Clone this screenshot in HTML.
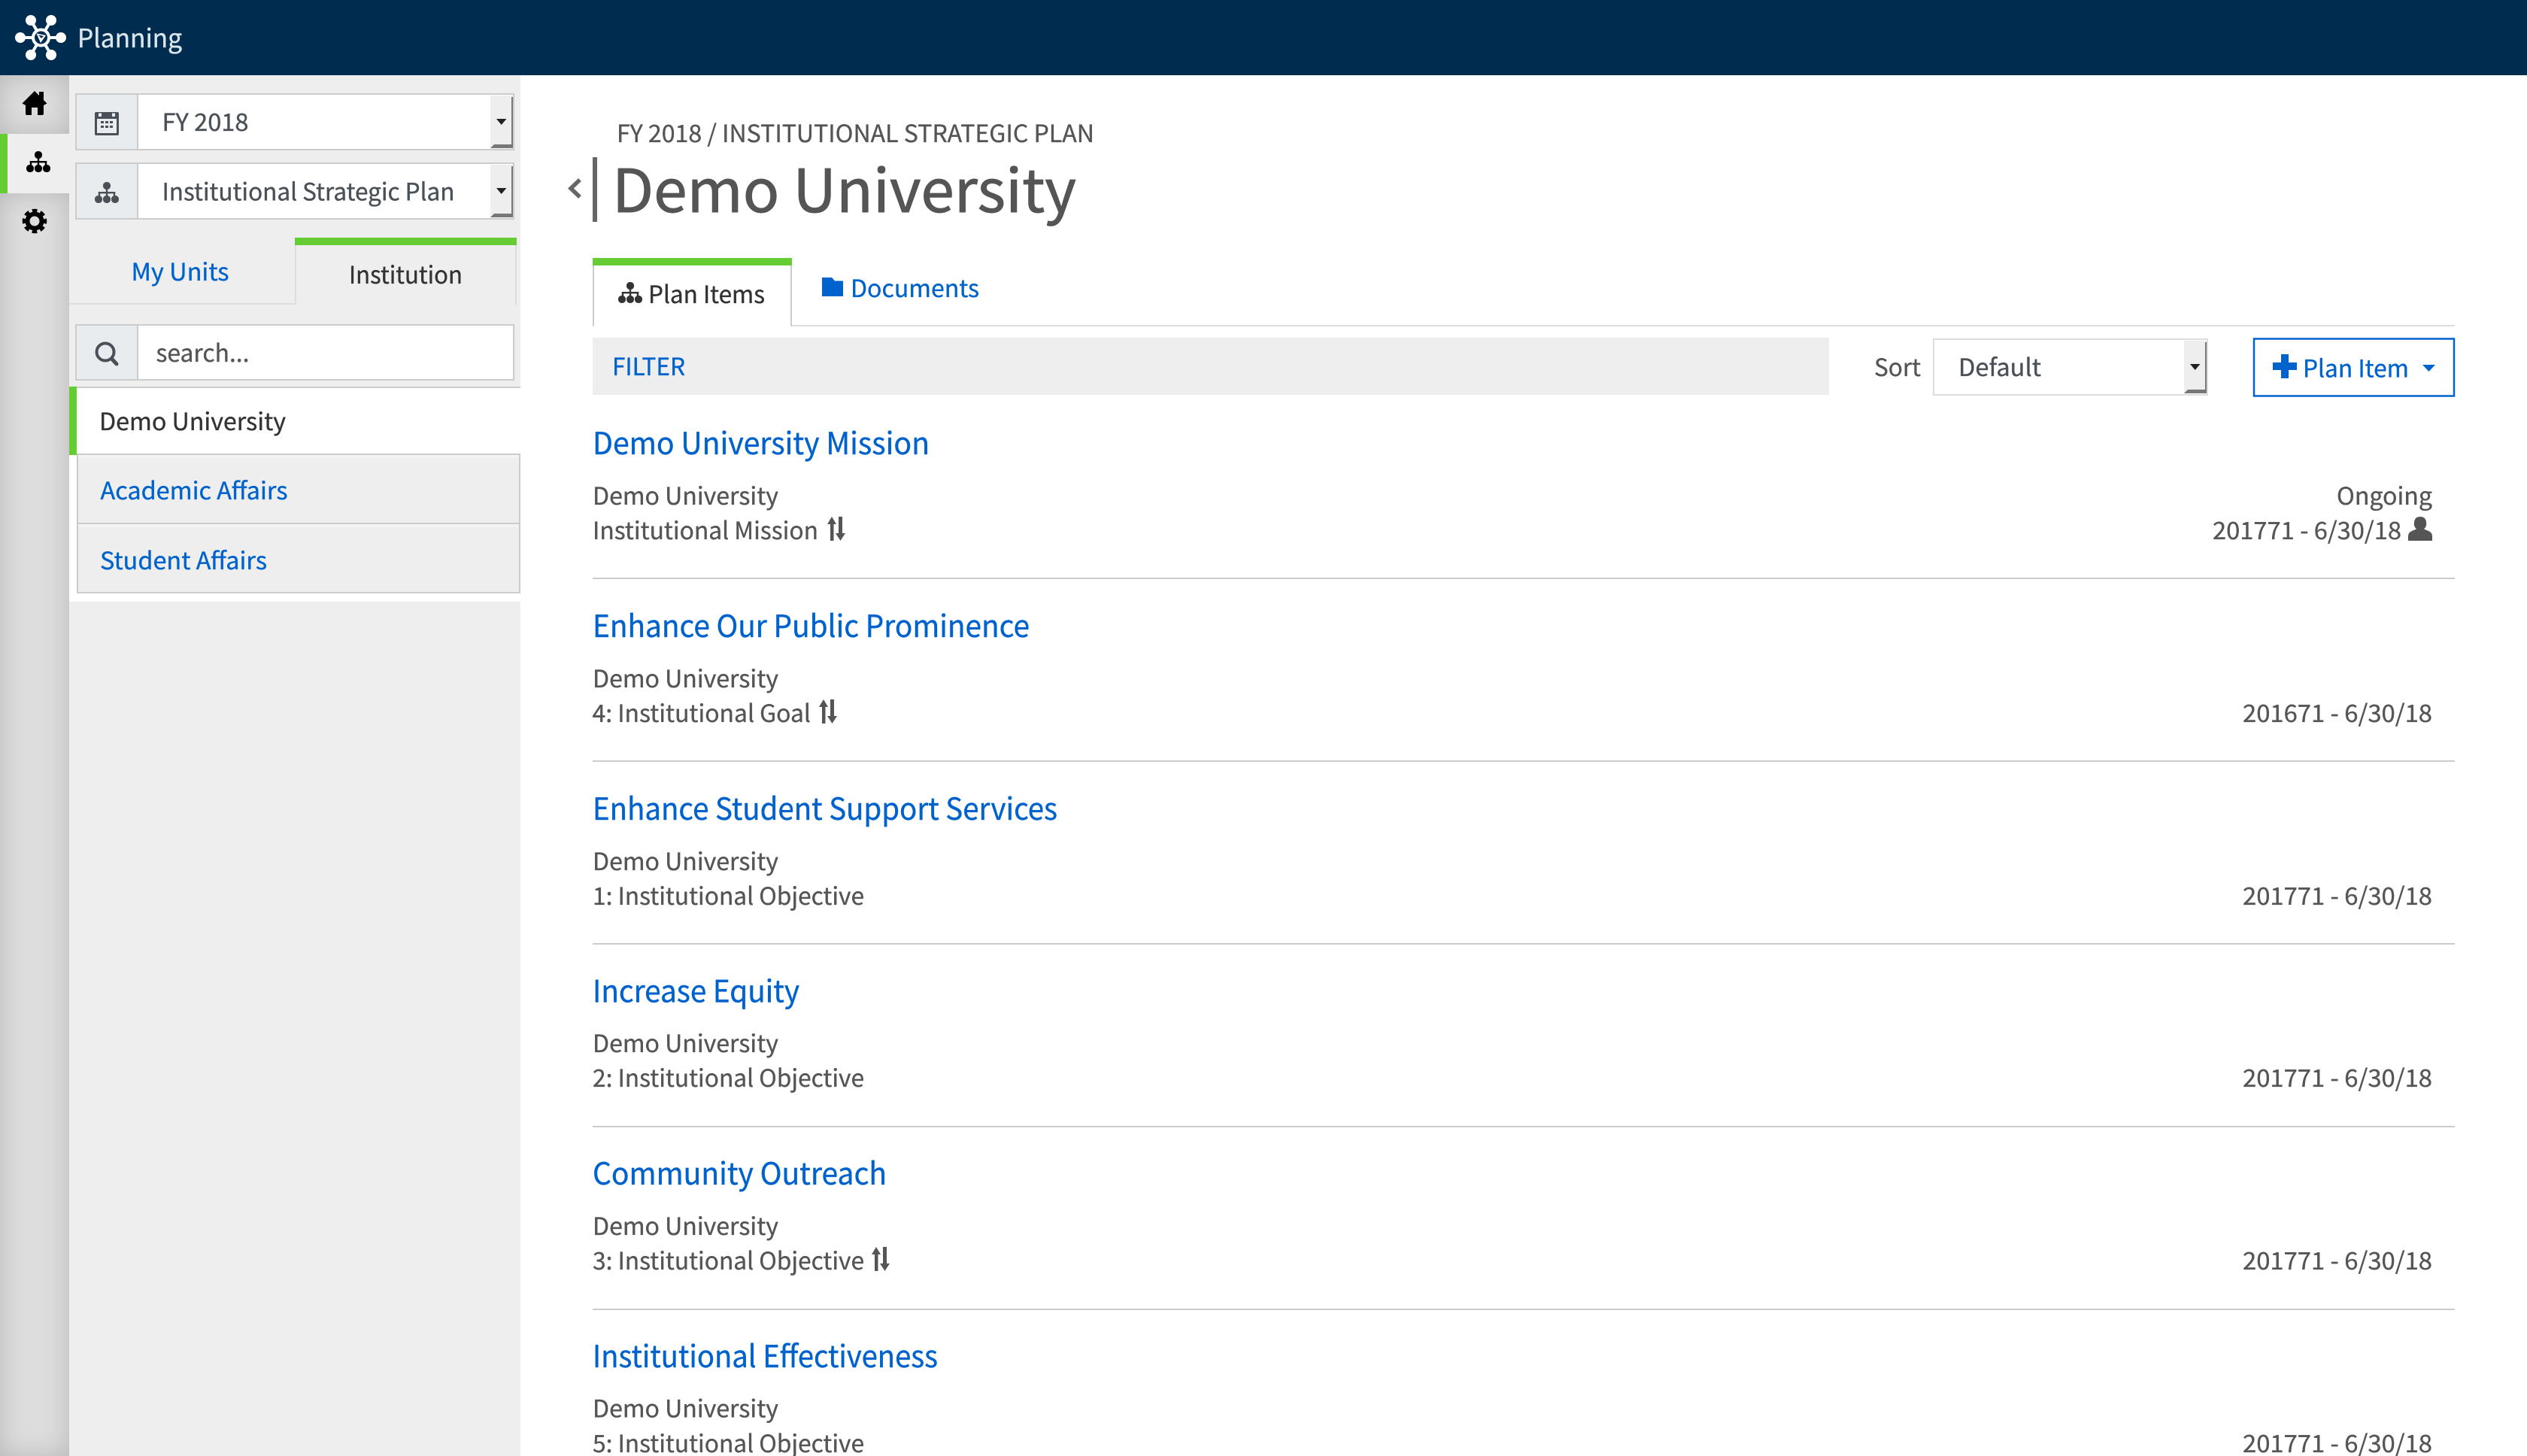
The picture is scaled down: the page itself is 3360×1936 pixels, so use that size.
<!DOCTYPE html>
<html><head><meta charset="utf-8"><title>Planning</title>
<style>
html,body{margin:0;padding:0;background:#fff}
body{width:3360px;height:1936px;overflow:hidden;position:relative}
.r{position:absolute;left:0;width:92px;background:#ddd;box-shadow:inset 0 0 34px rgba(0,0,0,.17)}
svg{position:absolute;left:0;top:0}
text{font-family:"Noto Sans CJK JP","Liberation Sans",sans-serif;font-size:32px;fill:#555;stroke:#555;stroke-width:.35px;text-rendering:geometricPrecision}
.l{fill:#0062cc;stroke:#0062cc}.d{fill:#333;stroke:#333}.t{font-size:40.5px;fill:#0062cc;stroke:#0062cc;stroke-width:.4px}.g{fill:#495057;stroke:#495057}
</style></head><body>
<div class="r" style="top:100px;height:78px"></div>
<div class="r" style="top:257px;height:1679px"></div>
<svg width="3360" height="1936" viewBox="0 0 3360 1936" xmlns="http://www.w3.org/2000/svg">
<defs>
<symbol id="org" viewBox="0 0 32 28" overflow="visible"><rect x="11" y="0" width="10" height="10" rx="4.5"/><rect x="14.8" y="9" width="2.4" height="10"/><rect x="4.8" y="13" width="22.4" height="2.4"/><rect x="4.8" y="13" width="2.4" height="6"/><rect x="24.8" y="13" width="2.4" height="6"/><rect x="0" y="18" width="10" height="10" rx="4.5"/><rect x="11" y="18" width="10" height="10" rx="4.5"/><rect x="22" y="18" width="10" height="10" rx="4.5"/></symbol>
<symbol id="arr" viewBox="0 0 24 32" overflow="visible"><path d="M6 0L12 10H8.5V32H4V10H0Z M15 0H20V22H24L17.5 32L11 22H15Z"/></symbol>
<symbol id="sel" viewBox="0 0 32 70" overflow="visible"><rect width="30" height="70" fill="#eee"/><rect x="28" y="2" width="2" height="68" fill="#777"/><path d="M0 70L5 65H28V70Z" fill="#777"/><path d="M8 31H21.5L14.7 39Z" fill="#222"/></symbol>
</defs>

<rect width="3360" height="100" fill="#002d4f"/>
<g fill="#fff" stroke="#fff">
<g stroke-width="4"><path d="M41 27L68 73M68 27L41 73M27 50H81"/></g>
<g stroke="none"><circle cx="41" cy="27" r="7"/><circle cx="68" cy="27" r="7"/><circle cx="27" cy="50" r="7"/><circle cx="81" cy="50" r="7"/><circle cx="41" cy="73" r="7"/><circle cx="68" cy="73" r="7"/></g>
<circle cx="54.5" cy="50" r="10.5" fill="#002d4f" stroke-width="4"/>
<path d="M48.5 44.5L61 47L54 57Z" stroke="none"/><path d="M51 46.5L55 51L58 48Z" fill="#002d4f" stroke="none"/>
</g>
<text x="103" y="63" textLength="139" lengthAdjust="spacingAndGlyphs" style="fill:#dbe5ec;stroke:#dbe5ec;font-size:34px">Planning</text>

<!-- rail -->
<rect x="0" y="178" width="92" height="79" fill="#eee"/><rect x="0" y="178" width="10" height="79" fill="#66cc33"/>
<path d="M46 121L52 127V122H58V133L62.500 137.500L58 140V151Q58 153 56 153H50V143H42V153H36Q34 153 34 151V140L29.500 137.500Z"/>
<use href="#org" x="35" y="201" width="32" height="28" fill="#000"/>
<g fill="none" stroke="#000"><circle cx="46" cy="294" r="9.5" stroke-width="6"/><circle cx="46" cy="294" r="14" stroke-width="4.500" stroke-dasharray="6.500 4.500" stroke-dashoffset="3.250"/></g>

<!-- sidebar -->
<rect x="92" y="100" width="600" height="1836" fill="#eee"/>
<rect x="101" y="125" width="582" height="74" fill="#fff" stroke="#ccc" stroke-width="2"/>
<rect x="102" y="126" width="80" height="72" fill="#e9ecef"/><rect x="182" y="126" width="2" height="72" fill="#ccc"/>
<use href="#sel" x="652" y="127" width="32" height="70"/>
<g fill="#495057"><path d="M126 151Q126 149 128 149H156Q158 149 158 151V178Q158 180 156 180H128Q126 180 126 178Z"/></g>
<path d="M129 158H155V177H129Z M131 150.500H135V155H131Z M149 150.500H153V155H149Z" fill="#e9ecef"/>
<path d="M134 161h4v3h-4zM140 161h4v3h-4zM146 161h4v3h-4zM134 167h4v3h-4zM140 167h4v3h-4zM146 167h4v3h-4z" fill="#495057"/>
<text x="215.500" y="174" textLength="115" lengthAdjust="spacingAndGlyphs" class="g">FY 2018</text>

<rect x="101" y="217" width="582" height="74" fill="#fff" stroke="#ccc" stroke-width="2"/>
<rect x="102" y="218" width="80" height="72" fill="#e9ecef"/><rect x="182" y="218" width="2" height="72" fill="#ccc"/>
<use href="#sel" x="652" y="219" width="32" height="70"/>
<use href="#org" x="126" y="242" width="32" height="28" fill="#495057"/>
<text x="215.500" y="266.500" textLength="389" lengthAdjust="spacingAndGlyphs" class="g">Institutional Strategic Plan</text>

<rect x="92" y="403" width="300" height="2" fill="#ddd"/><rect x="392" y="326" width="2" height="79" fill="#ddd"/>
<rect x="685" y="326" width="2" height="79" fill="#ddd"/>
<rect x="392" y="316" width="295" height="10" fill="#66cc33"/>
<text x="174.500" y="373" textLength="130" lengthAdjust="spacingAndGlyphs" class="l">My Units</text>
<text x="464" y="377" textLength="151" lengthAdjust="spacingAndGlyphs" class="d">Institution</text>

<rect x="101" y="432" width="582" height="73" fill="#fff" stroke="#ccc" stroke-width="2"/>
<rect x="102" y="433" width="80" height="71" fill="#e9ecef"/><rect x="182" y="433" width="2" height="71" fill="#ccc"/>
<g fill="none" stroke="#495057"><circle cx="140" cy="468" r="11.500" stroke-width="4"/><path d="M148.500 477L155 484" stroke-width="5" stroke-linecap="round"/></g>
<text x="207.500" y="481" textLength="124" lengthAdjust="spacingAndGlyphs">search...</text>

<rect x="92" y="514" width="600" height="91" fill="#fff"/><rect x="92" y="605" width="10" height="195" fill="#fff"/><rect x="102" y="789" width="590" height="11" fill="#fff"/>
<rect x="102" y="514" width="590" height="2" fill="#ccc"/><rect x="102" y="603" width="590" height="2" fill="#ccc"/>
<rect x="92" y="514" width="10" height="91" fill="#66cc33"/>
<rect x="103" y="605" width="588" height="91" fill="#eee" stroke="#ccc" stroke-width="2"/><rect x="104" y="605" width="586" height="4" fill="#f3f3f3"/>
<rect x="103" y="697" width="588" height="91" fill="#eee" stroke="#ccc" stroke-width="2"/><rect x="104" y="697" width="586" height="4" fill="#f3f3f3"/>
<text x="132" y="572" textLength="248" lengthAdjust="spacingAndGlyphs" class="d">Demo University</text>
<text x="133.500" y="664" textLength="249" lengthAdjust="spacingAndGlyphs" class="l">Academic Affairs</text>
<text x="133" y="757" textLength="222" lengthAdjust="spacingAndGlyphs" class="l">Student Affairs</text>

<!-- header -->
<text x="820" y="189" textLength="635" lengthAdjust="spacingAndGlyphs">FY 2018 / INSTITUTIONAL STRATEGIC PLAN</text>
<rect x="788" y="209" width="6" height="86" fill="#666"/>
<path d="M771 239L759 250.500L771 262" fill="none" stroke="#666" stroke-width="5.500"/>
<text x="814" y="282" textLength="617" lengthAdjust="spacingAndGlyphs" style="font-size:79px;stroke-width:.9px">Demo University</text>

<!-- tabs -->
<rect x="1052" y="432" width="2212" height="2" fill="#ddd"/>
<rect x="788" y="343" width="2" height="91" fill="#ccc"/><rect x="1051" y="343" width="2" height="91" fill="#ccc"/>
<rect x="788" y="343" width="265" height="10" fill="#66cc33"/>
<use href="#org" x="822" y="375" width="32" height="28" fill="#333"/>
<text x="862" y="403" textLength="155" lengthAdjust="spacingAndGlyphs" class="d">Plan Items</text>
<path d="M1093 369H1106L1110 373.500H1121V394H1093Z" fill="#0062cc"/>
<text x="1131" y="395" textLength="171" lengthAdjust="spacingAndGlyphs" class="l">Documents</text>

<!-- filter -->
<rect x="788" y="449" width="1644" height="76" fill="#eee"/>
<text x="814" y="499" textLength="97" lengthAdjust="spacingAndGlyphs" class="l">FILTER</text>
<text x="2492" y="500" textLength="62" lengthAdjust="spacingAndGlyphs">Sort</text>
<rect x="2571" y="451" width="364" height="74" fill="#fff" stroke="#ddd" stroke-width="2"/>
<use href="#sel" x="2904" y="452" width="32" height="72"/>
<text x="2604" y="500" textLength="110" lengthAdjust="spacingAndGlyphs" class="g">Default</text>
<rect x="2997" y="450.500" width="266" height="76" fill="#fff" stroke="#0062cc" stroke-width="2.500"/>
<path d="M3033 471H3043V482H3054V492H3043V503H3033V492H3022V482H3033Z" fill="#0062cc"/>
<text x="3062" y="501.500" textLength="141" lengthAdjust="spacingAndGlyphs" class="l">Plan Item</text>
<path d="M3221 485H3238L3229.500 494Z" fill="#0062cc"/>

<!-- rows -->
<g fill="#555"><path d="M3202 719V713Q3202 708 3207 706L3213 703.500Q3209 700 3210 694Q3211 687 3218 687Q3225 687 3226 694Q3227 700 3223 703.500L3229 706Q3234 708 3234 713V719Z"/></g>
<text x="788" y="604" textLength="448" lengthAdjust="spacingAndGlyphs" class="t">Demo University Mission</text>
<text x="788" y="671" textLength="247" lengthAdjust="spacingAndGlyphs">Demo University</text>
<text x="788" y="717" textLength="300" lengthAdjust="spacingAndGlyphs">Institutional Mission</text>
<use href="#arr" x="1100" y="687" width="24" height="32" fill="#555"/>
<text x="3107" y="671" textLength="127" lengthAdjust="spacingAndGlyphs">Ongoing</text>
<text x="2942" y="717" textLength="251" lengthAdjust="spacingAndGlyphs">201771 - 6/30/18</text>
<rect x="788" y="768" width="2476" height="2" fill="#ccc"/>

<text x="788" y="847" textLength="581" lengthAdjust="spacingAndGlyphs" class="t">Enhance Our Public Prominence</text>
<text x="788" y="914" textLength="247" lengthAdjust="spacingAndGlyphs">Demo University</text>
<text x="787.500" y="960" textLength="290.500" lengthAdjust="spacingAndGlyphs">4: Institutional Goal</text>
<use href="#arr" x="1089" y="930" width="24" height="32" fill="#555"/>
<text x="2982" y="960" textLength="252" lengthAdjust="spacingAndGlyphs">201671 - 6/30/18</text>
<rect x="788" y="1011" width="2476" height="2" fill="#ccc"/>

<text x="788" y="1090" textLength="618" lengthAdjust="spacingAndGlyphs" class="t">Enhance Student Support Services</text>
<text x="788" y="1157" textLength="247" lengthAdjust="spacingAndGlyphs">Demo University</text>
<text x="788" y="1203" textLength="361" lengthAdjust="spacingAndGlyphs">1: Institutional Objective</text>
<text x="2982" y="1203" textLength="252" lengthAdjust="spacingAndGlyphs">201771 - 6/30/18</text>
<rect x="788" y="1254" width="2476" height="2" fill="#ccc"/>

<text x="788" y="1332.500" textLength="275" lengthAdjust="spacingAndGlyphs" class="t">Increase Equity</text>
<text x="788" y="1399" textLength="247" lengthAdjust="spacingAndGlyphs">Demo University</text>
<text x="788" y="1445" textLength="361" lengthAdjust="spacingAndGlyphs">2: Institutional Objective</text>
<text x="2982" y="1445" textLength="252" lengthAdjust="spacingAndGlyphs">201771 - 6/30/18</text>
<rect x="788" y="1497" width="2476" height="2" fill="#ccc"/>

<text x="788" y="1575" textLength="391" lengthAdjust="spacingAndGlyphs" class="t">Community Outreach</text>
<text x="788" y="1642" textLength="247" lengthAdjust="spacingAndGlyphs">Demo University</text>
<text x="788" y="1688" textLength="361" lengthAdjust="spacingAndGlyphs">3: Institutional Objective</text>
<use href="#arr" x="1159" y="1658" width="24" height="32" fill="#555"/>
<text x="2982" y="1688" textLength="252" lengthAdjust="spacingAndGlyphs">201771 - 6/30/18</text>
<rect x="788" y="1740" width="2476" height="2" fill="#ccc"/>

<text x="788" y="1818" textLength="459" lengthAdjust="spacingAndGlyphs" class="t">Institutional Effectiveness</text>
<text x="788" y="1884.500" textLength="247" lengthAdjust="spacingAndGlyphs">Demo University</text>
<text x="788" y="1931" textLength="361" lengthAdjust="spacingAndGlyphs">5: Institutional Objective</text>
<text x="2982" y="1931" textLength="252" lengthAdjust="spacingAndGlyphs">201771 - 6/30/18</text>
</svg>
</body></html>
